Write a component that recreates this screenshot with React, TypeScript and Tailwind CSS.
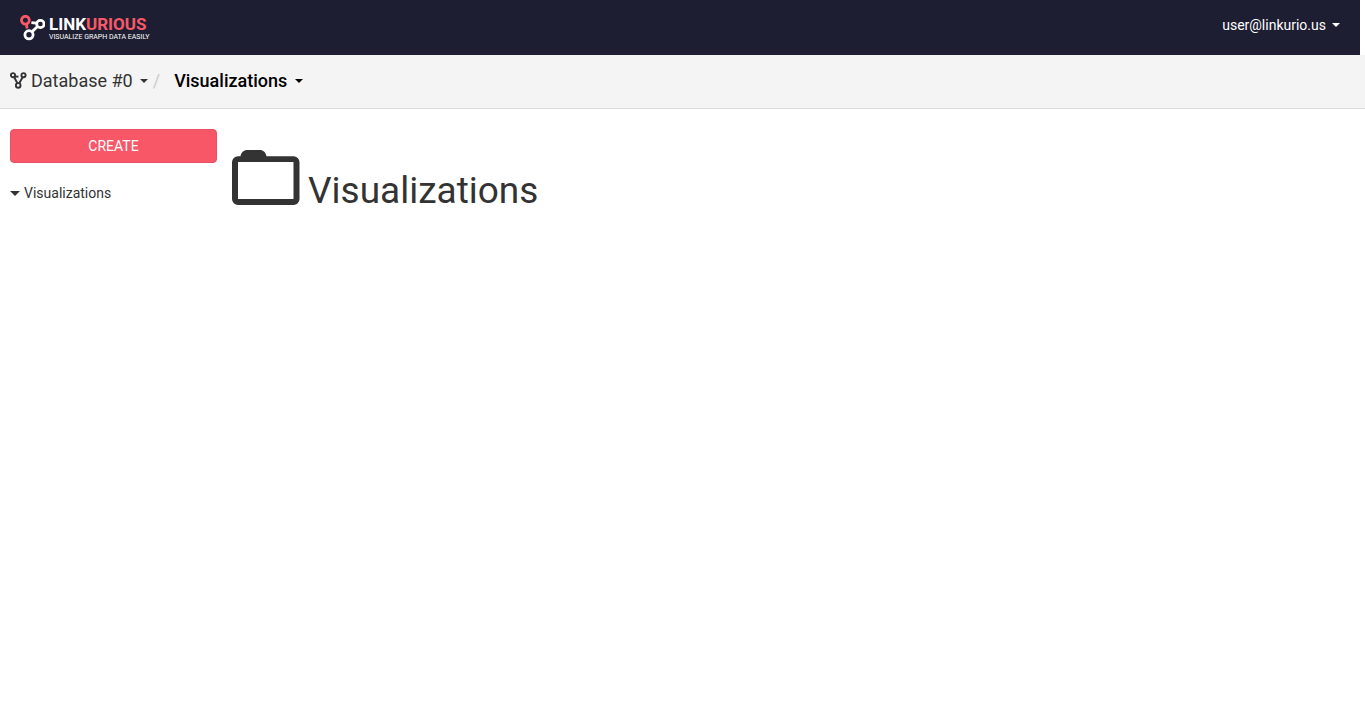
import React from "react";

function Caret({ className = "" }: { className?: string }) {
  return (
    <svg viewBox="0 0 8 4" className={`h-1 w-2 shrink-0 ${className}`} fill="currentColor" aria-hidden="true">
      <path d="M0 0h8L4 4z" />
    </svg>
  );
}

function Logo() {
  return (
    <a href="#home" className="flex items-center gap-1 text-white" aria-label="Linkurious home">
      <svg viewBox="0 0 25 26" className="h-[26px] w-[25px] shrink-0" fill="none" strokeWidth="2.8" aria-hidden="true">
        <path d="M6.5 9.5l.6 4" stroke="#f95968" />
        <circle cx="5.4" cy="5.2" r="3.9" stroke="#f95968" />
        <path d="M11.4 7.6l5 .6M17.3 11.8l-5.2 4.8" stroke="#fff" />
        <circle cx="20.4" cy="9" r="3.7" stroke="#fff" />
        <circle cx="9" cy="19.8" r="4.1" stroke="#fff" />
      </svg>
      <span className="flex flex-col whitespace-nowrap">
        <span className="text-[17px] leading-[18px] font-bold">
          LINK<span className="text-[#f95968]">URIOUS</span>
        </span>
        <span className="text-[7px] leading-2">VISUALIZE GRAPH DATA EASILY</span>
      </span>
    </a>
  );
}

function GraphIcon() {
  return (
    <svg viewBox="0 0 17 17" className="h-[17px] w-[17px] shrink-0" fill="none" stroke="#333" strokeWidth="1.9" aria-hidden="true">
      <circle cx="3" cy="3.2" r="2.1" />
      <circle cx="13.5" cy="3.2" r="2.1" />
      <circle cx="8.2" cy="13.4" r="2.3" />
      <path d="M5 4.4l3.4.4M4.2 5.2l3.2 6M12.6 5.2l-3.4 6" />
    </svg>
  );
}

function FolderIcon() {
  return (
    <svg viewBox="0 0 68 56" className="h-14 w-[68px] shrink-0" fill="#333" aria-hidden="true">
      <path
        fillRule="evenodd"
        d="M8.5 6.2C9.2 2.5 11.5 0 15.5 0h12c4 0 6.3 2.5 7 6.2h27a6 6 0 0 1 6 6V49a6 6 0 0 1-6 6H6a6 6 0 0 1-6-6V12.200a6 6 0 0 1 6-6zM6 12v37h55.5V12z"
      />
    </svg>
  );
}

export default function App() {
  return (
    <div className="min-h-screen bg-white font-[Roboto,sans-serif] text-sm text-[#333]">
      <header className="mr-[5px] flex h-[55px] items-center justify-between bg-[#1e1e32] px-5">
        <Logo />
        <button type="button" className="flex items-center gap-1.5 pb-1.5 text-white">
          user@linkurio.us
          <Caret />
        </button>
      </header>
      <nav className="flex h-[54px] items-center border-b border-[#ddd] bg-[#f4f4f4] px-2.5 pb-0.5 text-lg" aria-label="Breadcrumb">
        <button type="button" className="flex items-center gap-1">
          <GraphIcon />
          Database #0
          <Caret className="ml-[3px]" />
        </button>
        <span className="ml-[5px] text-[#ccc]">/</span>
        <button type="button" className="ml-3.5 flex items-center gap-2 font-medium text-black">
          Visualizations
          <Caret />
        </button>
      </nav>
      <div className="flex gap-[15px] px-2.5 pt-5">
        <aside className="w-[207px] shrink-0">
          <button type="button" className="h-[34px] w-full rounded border border-[#e75262] bg-[#f75767] text-white">
            CREATE
          </button>
          <button type="button" className="mt-5 flex items-center gap-1">
            <svg viewBox="0 0 10 5" className="h-[5px] w-2.5" fill="currentColor" aria-hidden="true">
              <path d="M0 0h10L5 5z" />
            </svg>
            Visualizations
          </button>
        </aside>
        <main className="flex min-w-0 flex-1 items-end gap-2 pt-[21px]">
          <FolderIcon />
          <h1 className="text-[37px] leading-[30px]">Visualizations</h1>
        </main>
      </div>
    </div>
  );
}
